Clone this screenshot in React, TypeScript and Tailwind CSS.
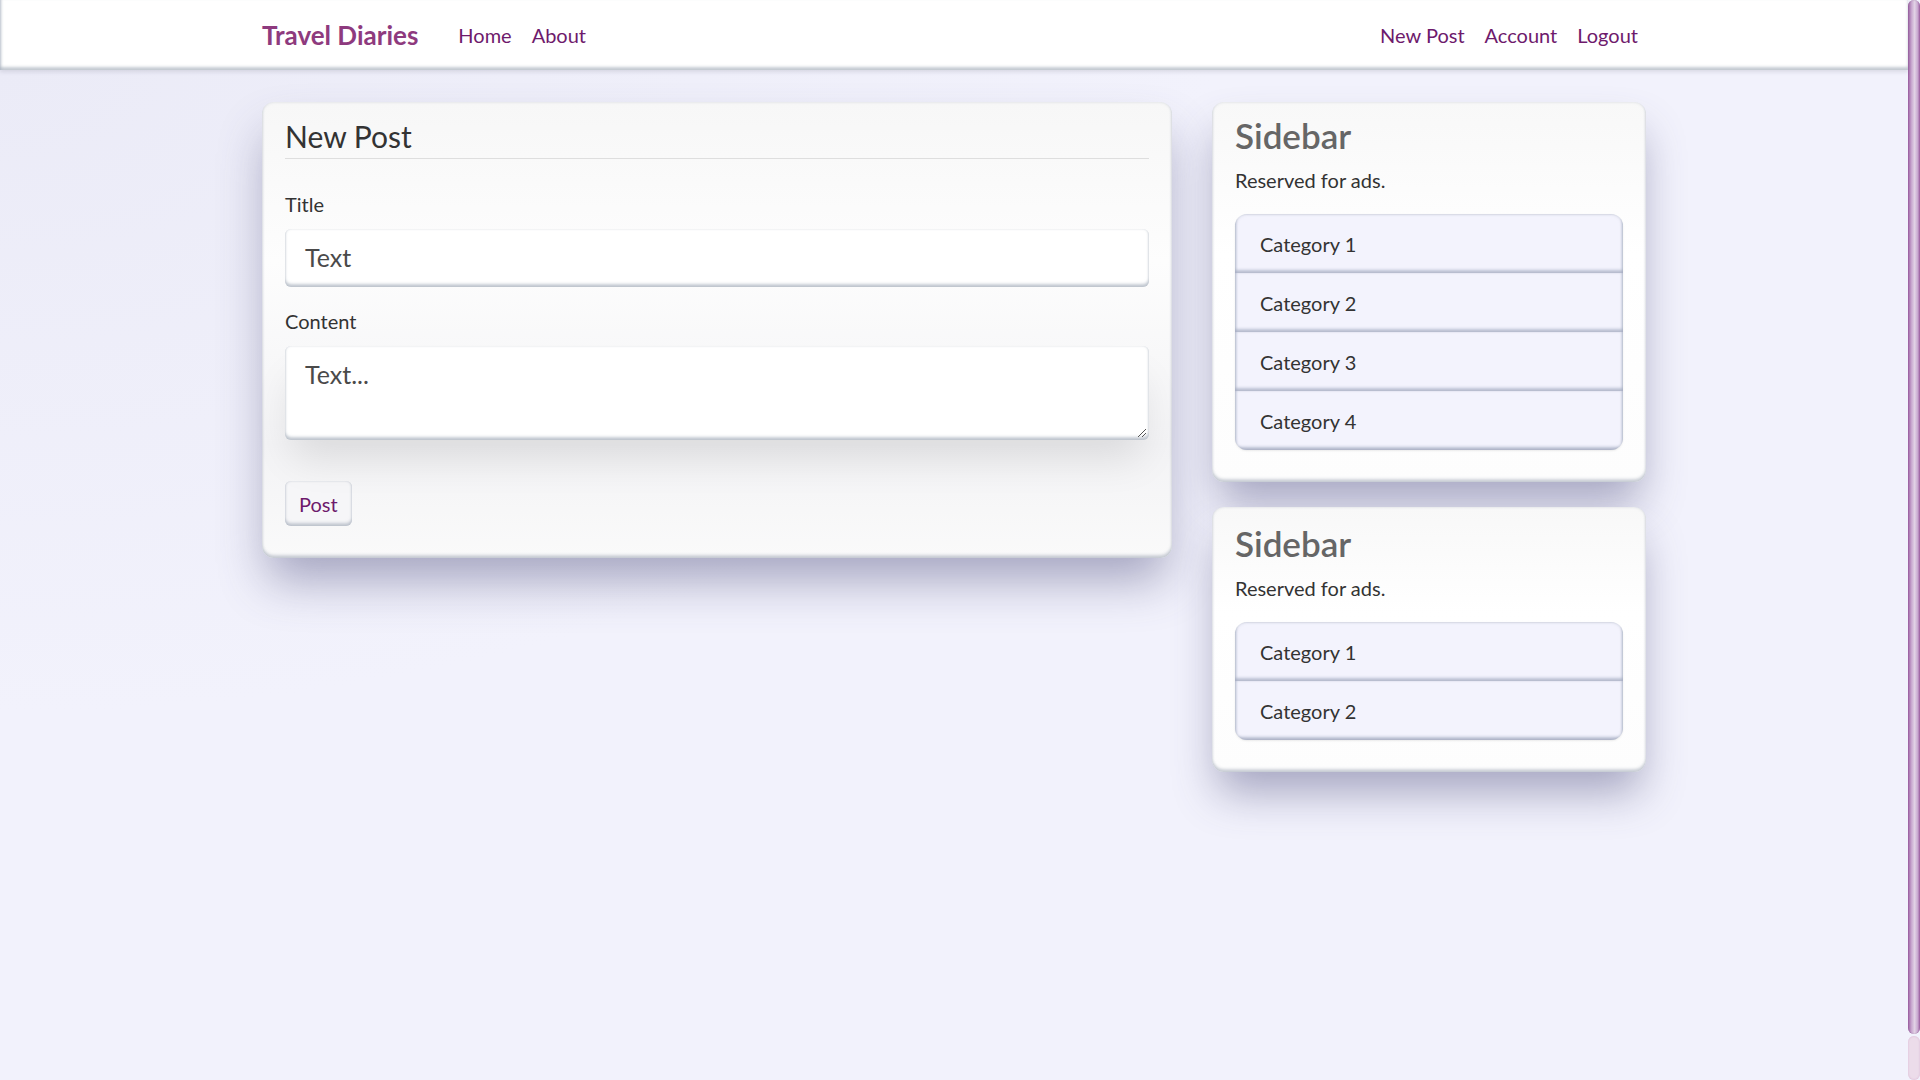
import React from "react";

const font = { fontFamily: '"Lato", "Noto Sans", sans-serif' };

function Sidebar({ items, second }: { items: string[]; second?: boolean }) {
  return (
    <div
      className={
        "rounded-xl bg-[linear-gradient(180deg,#f8f8f8_0%,#ffffff_40%,#fdfdfd_100%)] px-[23px] pb-8 shadow-[inset_0_-3px_3px_rgba(150,160,175,0.45),inset_0_0_3px_rgba(150,160,175,0.35),0_26px_44px_-6px_rgba(70,70,120,0.45)] " +
        (second ? "pt-[15px]" : "pt-3")
      }
    >
      <h3 className="text-[35px] leading-[43px] font-semibold text-[#666]">Sidebar</h3>
      <p className="mt-[8px] text-[20px] leading-[30px] text-[#333]">Reserved for ads.</p>
      <ul className="mt-[19px] overflow-hidden rounded-xl bg-[#f3f3fd] shadow-[inset_0_0_3px_rgba(150,160,180,0.5),0_1px_2px_rgba(0,0,0,0.08)]">
        {items.map((c) => (
          <li
            key={c}
            className="flex h-[59px] items-center px-[25px] text-[20px] text-[#333] shadow-[inset_0_-3px_3px_rgba(140,150,175,0.55),inset_2px_0_3px_-1px_rgba(150,160,180,0.35),inset_-2px_0_3px_-1px_rgba(150,160,180,0.35)]"
          >
            {c}
          </li>
        ))}
      </ul>
    </div>
  );
}

export default function App() {
  return (
    <div className="flex h-[1080px] w-[1920px] overflow-hidden bg-[#f2f2fc]" style={font}>
      <div className="flex w-[1908px] flex-col">
        <nav className="relative z-10 h-[70px] shrink-0 bg-white shadow-[inset_3px_0_3px_-2px_rgba(150,160,175,0.5),inset_0_-3px_3px_rgba(150,160,175,0.55),0_2px_4px_rgba(120,120,140,0.2)]">
          <div className="mx-auto flex h-full w-[1384px] items-center">
            <a className="mr-[30px] text-[26px] font-bold text-[#8e3a7e]">Travel Diaries</a>
            <a className="px-[10px] text-[20px] text-[#6e1a6c]">Home</a>
            <a className="px-[10px] text-[20px] text-[#6e1a6c]">About</a>
            <div className="ml-auto flex">
              <a className="px-[10px] text-[20px] text-[#6e1a6c]">New Post</a>
              <a className="px-[10px] text-[20px] text-[#6e1a6c]">Account</a>
              <a className="pl-[10px] pr-[8px] text-[20px] text-[#6e1a6c]">Logout</a>
            </div>
          </div>
        </nav>
        <main className="flex-1 bg-[radial-gradient(ellipse_at_top_left,#ebebf7_0%,#f2f2fc_45%)]">
          <div className="mx-auto mt-[32px] grid w-[1384px] grid-cols-[910px_434px] items-start gap-[40px]">
            <div className="rounded-xl bg-[linear-gradient(180deg,#f7f7f7_0%,#fdfdfd_35%,#f3f3f5_75%,#fafafa_100%)] px-[23px] pt-4 pb-8 shadow-[inset_0_-3px_3px_rgba(150,160,175,0.45),inset_0_0_3px_rgba(150,160,175,0.35),0_28px_48px_-6px_rgba(70,70,120,0.45)]">
              <h4 className="border-b border-[#dedede] pb-[4px] text-[30px] leading-[36px] text-[#333]">New Post</h4>
              <label className="mt-[30px] block text-[20px] leading-[30px] text-[#333]">Title</label>
              <div className="mt-[10px] flex h-[58px] items-center rounded-md bg-white px-5 text-[25px] text-[#4a4a4a] shadow-[inset_0_-3px_3px_rgba(150,160,175,0.55),inset_0_0_2px_rgba(150,160,175,0.45)]">
                Text
              </div>
              <label className="mt-[19px] block text-[20px] leading-[30px] text-[#333]">Content</label>
              <div className="relative mt-[10px] h-[94px] rounded-md bg-white px-5 pt-[10px] text-[25px] leading-[36px] text-[#4a4a4a] shadow-[inset_0_-3px_3px_rgba(150,160,175,0.55),inset_0_0_2px_rgba(150,160,175,0.45),0_26px_40px_-8px_rgba(0,0,0,0.1)]">
                Text...
                <svg className="absolute right-[2px] bottom-[2px]" width="10" height="10" viewBox="0 0 10 10">
                  <path d="M9 1L1 9M9 5L5 9" stroke="#555" strokeWidth="1" />
                </svg>
              </div>
              <button className="mt-[41px] h-[45px] rounded-md bg-[#f6f6f8] px-[14px] text-[20px] text-[#6e1a6c] shadow-[inset_0_-3px_3px_rgba(150,160,175,0.5),inset_0_0_2px_rgba(150,160,175,0.5)]">
                Post
              </button>
            </div>
            <div className="flex flex-col gap-[25px]">
              <Sidebar items={["Category 1", "Category 2", "Category 3", "Category 4"]} />
              <Sidebar items={["Category 1", "Category 2"]} second />
            </div>
          </div>
        </main>
      </div>
      <div className="flex w-[12px] flex-col bg-[#f2f2fc]">
        <div className="h-[1034px] rounded-full bg-[linear-gradient(90deg,#9c5fa2_0%,#c9a9d0_30%,#e2d3e6_55%,#c9a9d0_80%,#9c5fa2_100%)] shadow-[inset_0_0_1px_rgba(100,40,100,0.6)]" />
        <div className="mt-[2px] flex-1 rounded-full bg-[#ecdcea] shadow-[inset_0_0_2px_rgba(200,150,190,0.6)]" />
      </div>
    </div>
  );
}
